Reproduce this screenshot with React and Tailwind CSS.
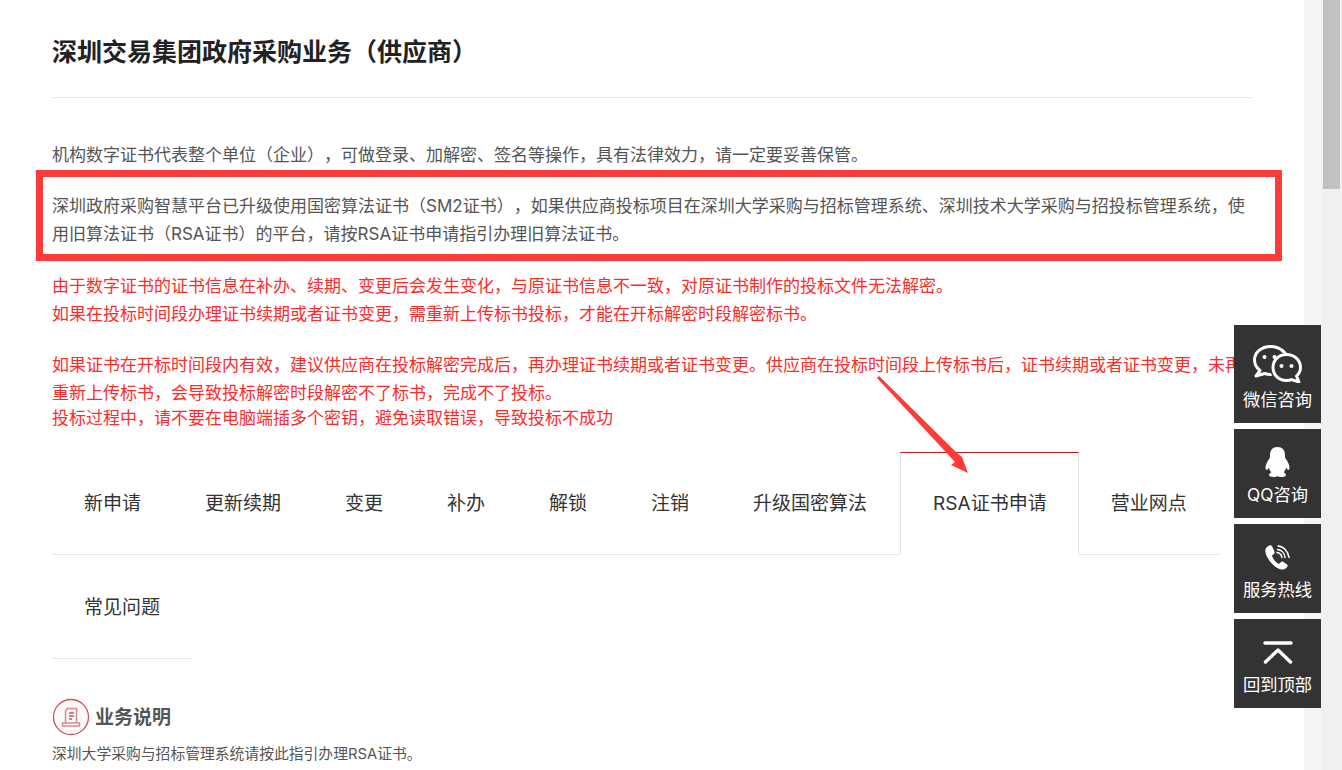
import React from 'react';

const TABS = ['新申请', '更新续期', '变更', '补办', '解锁', '注销', '升级国密算法', 'RSA证书申请', '营业网点', '常见问题'];
const ACTIVE_TAB = 'RSA证书申请';

const WechatIcon = () => (
  <svg width="49" height="38" viewBox="0 0 49 38" fill="none">
    <path d="M17.500 1.500C8.500 1.500 1.500 7.500 1.500 15c0 4.500 2.300 8 5.500 10.500L3 31l8.500-2.500c2 .6 4 .9 6 .9 9 0 17-6.500 17-14C34.500 7.500 26.500 1.500 17.500 1.500z" stroke="#fff" strokeWidth="3" strokeLinejoin="round" />
    <ellipse cx="33.500" cy="23" rx="16.500" ry="15" fill="#333333" />
    <path d="M33.500 9.500c-7.500 0-13.500 5.500-13.500 13s6 13 13.500 13c2 0 3.500-.3 5-.9L46 37l-2.500-6c2.500-2.300 4-5 4-8.500 0-7.500-6.500-13-14-13z" stroke="#fff" strokeWidth="3" strokeLinejoin="round" />
    <circle cx="11.500" cy="12" r="2" fill="#fff" />
    <circle cx="21.500" cy="12" r="2" fill="#fff" />
    <circle cx="28.500" cy="21" r="2" fill="#fff" />
    <circle cx="38.500" cy="21" r="2" fill="#fff" />
  </svg>
);

const QQIcon = () => (
  <svg width="25" height="30" viewBox="0 0 25 30" fill="#fff">
    <path d="M12.500 0C7.500 0 5 3.500 5 8c0 1 0 2-.2 3C3 13.500 .5 17.500 .5 20.500c0 1.500 .5 2.500 1 2.500 .7 0 1.700-1.200 2.300-2.200 .4 1.800 1.300 3.300 2.700 4.500C5 26 4 27 4 28c0 1.500 2.500 2 4.500 2 1.800 0 3.300-.4 4-1 .7 .6 2.200 1 4 1 2 0 4.500-.5 4.500-2 0-1-1-2-2.500-2.700 1.400-1.200 2.300-2.700 2.700-4.500 .6 1 1.600 2.200 2.300 2.200 .5 0 1-1 1-2.500 0-3-2.500-7-4.300-9.500-.2-1-.2-2-.2-3 0-4.500-2.500-8-7.500-8z" />
  </svg>
);

const PhoneIcon = () => (
  <svg width="25" height="25" viewBox="0 0 25 25" fill="none">
    <path d="M4.500 .5C2 1.500 0 3.500 .3 6.500c.7 6 7 14.500 14.200 17.500 2.500 1 5.500 .5 7.500-1.800 1-1.100 .8-2-.3-2.900l-3.200-2.300c-1-.7-1.900-.6-2.700 .2l-1.200 1.200c-.5 .5-1 .5-1.600 .1-2.300-1.500-4.700-4.500-5.800-7-.3-.6-.2-1.100 .3-1.500l1.400-1.100c.8-.7 1-1.500 .5-2.400L7.200 1.500C6.600 .5 5.600 .1 4.500 .5z" fill="#fff" />
    <path d="M12 7.500c2.500 .3 4.500 2.300 5 5M12.500 4.500c4 .3 7 3.500 7.500 8M13 1c5.500 .3 10 5 11 11.500" stroke="#fff" strokeWidth="1.500" strokeLinecap="round" />
  </svg>
);

const TopIcon = () => (
  <svg width="30" height="23" viewBox="0 0 30 23" fill="none" stroke="#fff" strokeWidth="3.400" strokeLinecap="round" strokeLinejoin="round">
    <path d="M2 2h26" />
    <path d="M2.500 21L15 9 27.500 21" />
  </svg>
);

const BizIcon = () => (
  <svg width="38" height="38" viewBox="0 0 38 38" fill="none">
    <circle cx="19" cy="19" r="17.500" fill="#fffafa" stroke="#c8555f" strokeWidth="1.300" />
    <path d="M13.500 25V12.500l2-2h9v14.500" stroke="#d98a90" strokeWidth="1.500" />
    <path d="M17 15h5M17 18h5M17 21h3" stroke="#c8555f" strokeWidth="1.300" />
    <path d="M10.500 25h17v3h-17z" stroke="#d98a90" strokeWidth="1.500" />
  </svg>
);

const ArrowMark = () => (
  <svg className="absolute left-[876px] top-[375px]" width="96" height="100" viewBox="0 0 96 100" fill="#ff3a3a">
    <path d="M3 1L81 78 86 82 92 98 75 90 79 87 1 3z" />
  </svg>
);

const SideButton = ({ icon, label, className }) => (
  <div className={`flex flex-col items-center bg-[#333333] text-[17.3px] leading-6 text-white ${className}`}>
    <div className="flex flex-1 items-start justify-center">{icon}</div>
    <span className="mb-[11px]">{label}</span>
  </div>
);

export default function App() {
  return (
    <div className="relative flex h-[770px] overflow-hidden bg-white font-['Inter','Noto_Sans_CJK_SC',sans-serif] text-[#555555] [text-spacing-trim:space-all]">
      <main className="w-[1304px] shrink-0 pl-[52px]">
        <div className="w-[1200px]">
          <h1 className="h-[98px] border-b border-[#e5e5e5] pt-[34px] text-[25px] font-bold leading-9 text-[#222222]">
            深圳交易集团政府采购业务（供应商）
          </h1>

          <div className="pt-[43px] text-[17px] leading-7">
            <p>机构数字证书代表整个单位（企业），可做登录、加解密、签名等操作，具有法律效力，请一定要妥善保管。</p>
            <p className="mt-[23px]">
              深圳政府采购智慧平台已升级使用国密算法证书（SM2证书），如果供应商投标项目在深圳大学采购与招标管理系统、深圳技术大学采购与招投标管理系统，使用旧算法证书（RSA证书）的平台，请按RSA证书申请指引办理旧算法证书。
            </p>
            <div className="mt-[24px] text-[#ff2a2a]">
              <p>由于数字证书的证书信息在补办、续期、变更后会发生变化，与原证书信息不一致，对原证书制作的投标文件无法解密。</p>
              <p>如果在投标时间段办理证书续期或者证书变更，需重新上传标书投标，才能在开标解密时段解密标书。</p>
              <p className="mt-[23px]">
                如果证书在开标时间段内有效，建议供应商在投标解密完成后，再办理证书续期或者证书变更。供应商在投标时间段上传标书后，证书续期或者证书变更，未再重新上传标书，会导致投标解密时段解密不了标书，完成不了投标。
              </p>
              <p className="-mt-[3px]">投标过程中，请不要在电脑端插多个密钥，避免读取错误，导致投标不成功</p>
            </div>
          </div>

          <ul className="mt-[20px] flex w-[1168px] flex-wrap gap-y-px text-[19px] text-[#333333]">
            {TABS.map((tab) =>
              tab === ACTIVE_TAB ? (
                <li key={tab} className="ml-px flex h-[103px] items-center border border-[#e0e0e0] border-t-[#c9151e] border-b-transparent pl-[32px] pr-[31px] pt-[2px]">
                  {tab}
                </li>
              ) : (
                <li key={tab} className="flex h-[103px] items-center border-b border-[#e5e5e5] px-[32px] pt-[2px]">
                  {tab}
                </li>
              )
            )}
          </ul>

          <div className="mt-[39px] flex items-center gap-[5px]">
            <BizIcon />
            <h3 className="mt-[2px] text-[19px] font-bold text-[#555555]">业务说明</h3>
          </div>
          <p className="mt-[6px] text-[14.8px] leading-6">深圳大学采购与招标管理系统请按此指引办理RSA证书。</p>
        </div>
      </main>

      <div className="w-[17px] shrink-0 bg-[#f5f5f5]" />
      <div className="flex w-[21px] shrink-0 justify-center bg-[#f0f0f0]">
        <div className="h-[189px] w-[17px] bg-[#c1c1c1]" />
      </div>

      {/* annotations drawn over the page */}
      <div className="absolute left-[36px] top-[170px] h-[91px] w-[1246px] border-[7px] border-[#ff3a3a]" />
      <ArrowMark />

      <div className="absolute left-[1234px] top-[325px] flex w-[87px] flex-col gap-[6px]">
        <SideButton className="h-[98px] pt-[20px]" icon={<WechatIcon />} label="微信咨询" />
        <SideButton className="h-[89px] pt-[18px]" icon={<QQIcon />} label="QQ咨询" />
        <SideButton className="h-[89px] pt-[21px]" icon={<PhoneIcon />} label="服务热线" />
        <SideButton className="h-[89px] pt-[22px]" icon={<TopIcon />} label="回到顶部" />
      </div>
    </div>
  );
}
